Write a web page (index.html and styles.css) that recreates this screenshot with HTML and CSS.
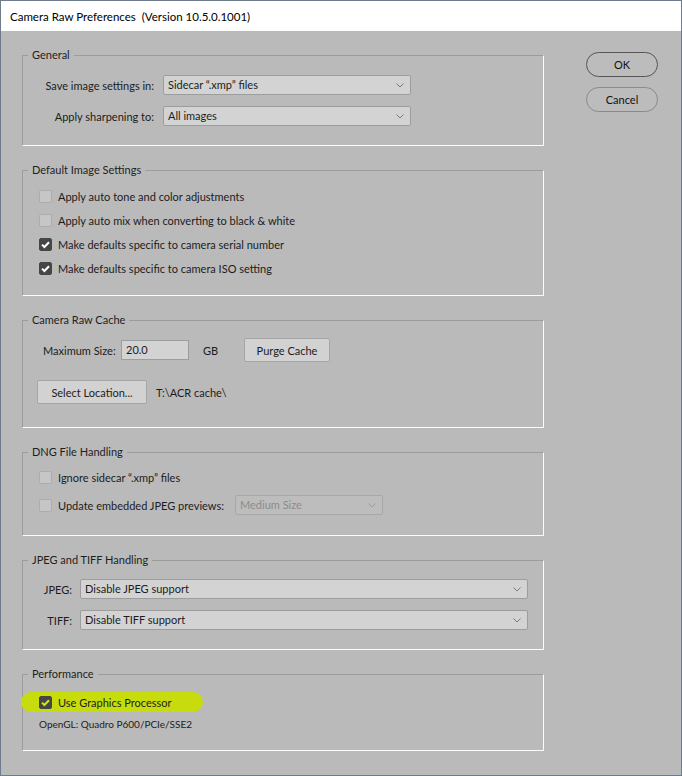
FILE: index.html
```html
<!DOCTYPE html>
<html>
<head>
<meta charset="utf-8">
<title>Camera Raw Preferences</title>
<link rel="stylesheet" href="styles.css">
</head>
<body>
<div class="window">
  <div class="titlebar">Camera Raw Preferences&nbsp; (Version 10.5.0.1001)</div>
  <div class="dialog">
    <div class="groups">

      <section class="group g-general">
        <div class="legend">General</div>
        <div class="form-grid general-grid">
          <span class="lbl">Save image settings in:</span>
          <div class="select"><span class="sel-text">Sidecar “.xmp” files</span><svg class="chev" width="8" height="5" viewBox="0 0 8 5"><path d="M0.5 0.5 L4 4 L7.5 0.5" fill="none" stroke="#7a7a7a" stroke-width="1"/></svg></div>
          <span class="lbl">Apply sharpening to:</span>
          <div class="select"><span class="sel-text">All images</span><svg class="chev" width="8" height="5" viewBox="0 0 8 5"><path d="M0.5 0.5 L4 4 L7.5 0.5" fill="none" stroke="#7a7a7a" stroke-width="1"/></svg></div>
        </div>
      </section>

      <section class="group g-default">
        <div class="legend">Default Image Settings</div>
        <div class="checks">
          <div class="check-row"><span class="box"></span><span>Apply auto tone and color adjustments</span></div>
          <div class="check-row"><span class="box"></span><span>Apply auto mix when converting to black &amp; white</span></div>
          <div class="check-row"><span class="box checked"><svg width="13" height="13" viewBox="0 0 13 13"><path d="M3 6.6 L5.4 9 L10 4.2" fill="none" stroke="#fff" stroke-width="2"/></svg></span><span>Make defaults specific to camera serial number</span></div>
          <div class="check-row"><span class="box checked"><svg width="13" height="13" viewBox="0 0 13 13"><path d="M3 6.6 L5.4 9 L10 4.2" fill="none" stroke="#fff" stroke-width="2"/></svg></span><span>Make defaults specific to camera ISO setting</span></div>
        </div>
      </section>

      <section class="group g-cache">
        <div class="legend">Camera Raw Cache</div>
        <div class="cache-row">
          <span class="cache-lbl">Maximum Size:</span>
          <div class="textfield">20.0</div>
          <span class="unit">GB</span>
          <button class="btn purge">Purge Cache</button>
        </div>
        <div class="cache-row loc-row">
          <button class="btn locate">Select Location...</button>
          <span class="path">T:\ACR cache\</span>
        </div>
      </section>

      <section class="group g-dng">
        <div class="legend">DNG File Handling</div>
        <div class="dng-rows">
          <div class="check-row"><span class="box"></span><span>Ignore sidecar “.xmp” files</span></div>
          <div class="check-row"><span class="box"></span><span class="dng-lbl">Update embedded JPEG previews:</span>
            <div class="select disabled dng-select"><span class="sel-text">Medium Size</span><svg class="chev" width="8" height="5" viewBox="0 0 8 5"><path d="M0.5 0.5 L4 4 L7.5 0.5" fill="none" stroke="#9a9a9a" stroke-width="1"/></svg></div>
          </div>
        </div>
      </section>

      <section class="group g-jpeg">
        <div class="legend">JPEG and TIFF Handling</div>
        <div class="form-grid jpeg-grid">
          <span class="lbl">JPEG:</span>
          <div class="select"><span class="sel-text">Disable JPEG support</span><svg class="chev" width="8" height="5" viewBox="0 0 8 5"><path d="M0.5 0.5 L4 4 L7.5 0.5" fill="none" stroke="#7a7a7a" stroke-width="1"/></svg></div>
          <span class="lbl">TIFF:</span>
          <div class="select"><span class="sel-text">Disable TIFF support</span><svg class="chev" width="8" height="5" viewBox="0 0 8 5"><path d="M0.5 0.5 L4 4 L7.5 0.5" fill="none" stroke="#7a7a7a" stroke-width="1"/></svg></div>
        </div>
      </section>

      <section class="group g-perf">
        <div class="legend">Performance</div>
        <div class="check-row highlight"><span class="box checked hl-box"><svg width="13" height="13" viewBox="0 0 13 13"><path d="M3 6.6 L5.4 9 L10 4.2" fill="none" stroke="#d2e812" stroke-width="2"/></svg></span><span>Use Graphics Processor</span></div>
        <div class="opengl">OpenGL: Quadro P600/PCIe/SSE2</div>
      </section>

    </div>
    <div class="actions">
      <button class="pill default">OK</button>
      <button class="pill">Cancel</button>
    </div>
  </div>
</div>
</body>
</html>
```

FILE: styles.css
```css
* { box-sizing: border-box; }

html, body {
  margin: 0;
  padding: 0;
  background: #bababa;
}

body {
  font-family: Lato, "Liberation Sans", Arial, sans-serif;
  font-size: 11px;
  color: #1c1c1c;
}

.window {
  width: 682px;
  height: 776px;
  border: 1px solid #6f7c8e;
  background: #bababa;
  display: flex;
  flex-direction: column;
}

.titlebar {
  height: 30px;
  line-height: 31px;
  background: #ffffff;
  padding-left: 9px;
  color: #000;
  font-size: 11.5px;
  white-space: nowrap;
}

.dialog {
  display: flex;
  padding-left: 21px;
}

.groups {
  width: 522px;
  display: flex;
  flex-direction: column;
  padding-top: 24px;
  gap: 24px;
}

.group {
  border: 1px solid;
  border-color: #9c9c9c #fbfbfb #fbfbfb #9c9c9c;
}

.legend {
  width: fit-content;
  height: 16px;
  line-height: 16px;
  margin: -9px 0 0 5px;
  padding: 0 4px;
  background: #bababa;
  color: #1e1e1e;
}

/* selects */
.select {
  height: 20px;
  background: #d3d3d3;
  border: 1px solid #9d9d9d;
  border-radius: 2px;
  display: flex;
  align-items: center;
  justify-content: space-between;
  padding: 0 6px 0 4px;
}
.sel-text { white-space: nowrap; line-height: 18px; }
.chev { flex: none; }

.select.disabled {
  background: #bdbdbd;
  border-color: #a8a8a8;
  color: #8c8c8c;
}

.form-grid {
  display: grid;
  row-gap: 11px;
  column-gap: 9px;
  align-items: center;
  padding-left: 20px;
}
.lbl { text-align: right; white-space: nowrap; }

.general-grid {
  grid-template-columns: 111px 248px;
  margin-top: 12px;
}
.g-general { padding-bottom: 19px; }

.jpeg-grid {
  grid-template-columns: 29px 448px;
  column-gap: 8px;
  margin-top: 11px;
}
.g-jpeg { padding-bottom: 19px; }

/* checkboxes */
.check-row {
  display: flex;
  align-items: center;
  padding-left: 16px;
  white-space: nowrap;
}
.box {
  flex: none;
  width: 13px;
  height: 13px;
  margin-right: 6px;
  background: #c6c6c6;
  border: 1px solid #adadad;
  border-radius: 2px;
  display: flex;
}
.box svg { margin: -1px; }
.box.checked {
  background: #464646;
  border-color: #464646;
}

.checks { margin-top: 6px; }
.checks .check-row { height: 24px; }
.g-default { padding-bottom: 15px; }

/* cache */
.g-cache { padding-bottom: 23px; }
.cache-row {
  display: flex;
  align-items: center;
  height: 24px;
  padding-left: 20px;
  margin-top: 10px;
}
.cache-lbl { width: 78px; white-space: nowrap; }
.textfield {
  width: 68px;
  height: 20px;
  line-height: 18px;
  background: #d3d3d3;
  border: 1px solid #9d9d9d;
  padding-left: 4px;
}
.unit { width: 41px; margin-left: 14px; }

.btn {
  font: inherit;
  color: #1c1c1c;
  height: 24px;
  background: #d2d2d2;
  border: 1px solid #a6a6a6;
  border-radius: 2px;
  padding: 0;
}
.purge { width: 86px; }
.loc-row { margin-top: 18px; padding-left: 14px; }
.locate { width: 110px; }
.path { margin-left: 9px; }

/* dng */
.dng-rows {
  margin-top: 7px;
  display: flex;
  flex-direction: column;
  gap: 8px;
}
.dng-rows .check-row { height: 20px; }
.dng-lbl { width: 177px; }
.dng-select { width: 148px; }
.g-dng { padding-bottom: 20px; }

/* performance */
.highlight {
  margin-top: 10px;
  margin-left: -2px;
  padding-left: 18px;
  width: 182px;
  height: 20px;
  background: #c6dc0d;
  border-radius: 10px;
}
.hl-box {
  background: #576300;
  border-color: #576300;
}
.opengl {
  margin-top: 5px;
  padding-left: 16px;
  height: 14px;
  line-height: 14px;
  font-size: 10px;
}
.g-perf { padding-bottom: 19px; }

/* right side buttons */
.actions {
  margin-left: 42px;
  padding-top: 21px;
  display: flex;
  flex-direction: column;
  gap: 10px;
}
.pill {
  font: inherit;
  color: #111;
  width: 72px;
  height: 25px;
  border-radius: 13px;
  background: #bcbcbc;
  border: 1px solid #8a8a8a;
  padding: 0;
}
.pill.default {
  border-color: #555;
}
```
